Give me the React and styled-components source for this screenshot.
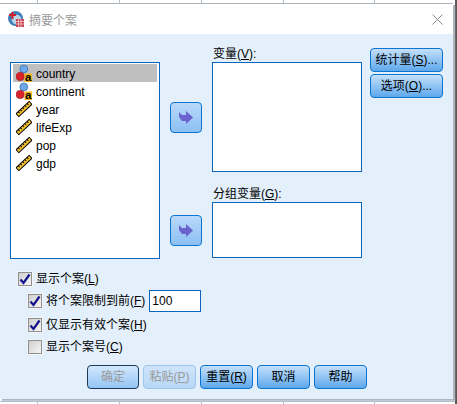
import React from "react";
import styled, { createGlobalStyle } from "styled-components";

const Global = createGlobalStyle`
  html, body { margin: 0; padding: 0; width: 457px; height: 404px; overflow: hidden; }
  body {
    font-family: "Liberation Sans", "Noto Sans CJK SC", sans-serif;
    font-size: 12px;
    color: #000;
    background-color: #fff;
    background-image:
      linear-gradient(#a9bfd2, #a9bfd2), linear-gradient(#a9bfd2, #a9bfd2), linear-gradient(#a9bfd2, #a9bfd2),
      linear-gradient(#a9bfd2, #a9bfd2), linear-gradient(#a9bfd2, #a9bfd2),
      linear-gradient(#5a5a5a, #5a5a5a),
      linear-gradient(to bottom, #a9bfd2 0 1px, #fff 1px);
    background-size: 1px 100%, 1px 100%, 1px 100%, 1px 100%, 1px 100%, 2px 1px, 100% 22px;
    background-position: 37px 0, 119px 0, 201px 0, 283px 0, 374px 0, 455px 19px, 0 5px;
    background-repeat: no-repeat, no-repeat, no-repeat, no-repeat, no-repeat, repeat-y, repeat;
  }
`;

const Dialog = styled.div`
  width: 453px;
  height: 395px;
  margin-top: 4px;
  display: flex;
  flex-direction: column;
  box-shadow: 0 -1px 0 #aab2ba, 2px 1px 0 #aeb5bc, 2px 2px 1px #c4c9ce;
`;

const TitleBar = styled.div`
  height: 30px;
  flex: none;
  background: #fff;
  display: flex;
  align-items: center;
  padding: 0 10px 0 8px;
  gap: 5px;
`;

const TitleText = styled.span`
  font-size: 12px;
  color: #9a9a9a;
  flex: 1;
  font-family: "Noto Sans CJK SC", sans-serif;
`;

const CloseIcon = styled.svg`
  width: 11px;
  height: 11px;
  flex: none;
`;

const Body = styled.div`
  flex: 1;
  background: #e3effb;
  padding: 28px 0 0 10px;
  display: flex;
  flex-direction: column;
`;

const TopRow = styled.div`
  display: flex;
  height: 197px;
  flex: none;
`;

const VarList = styled.div`
  width: 150px;
  box-sizing: border-box;
  border: 1px solid #0b65bd;
  background: #fff;
  padding: 1px 2px;
  flex: none;
`;

const VarRow = styled.div`
  height: 18px;
  display: flex;
  align-items: center;
  gap: 4px;
  padding-left: 3px;
  background: ${(p) => (p.$selected ? "#bfbfbf" : "transparent")};
`;

const VarName = styled.span`
  padding-top: 2px;
  line-height: 16px;
`;

const ArrowColumn = styled.div`
  width: 52px;
  flex: none;
  padding-left: 10px;
  box-sizing: border-box;
  padding-top: 40px;
  display: flex;
  flex-direction: column;
  gap: 82px;
`;

const ArrowButton = styled.div`
  width: 32px;
  height: 31px;
  box-sizing: border-box;
  border: 1px solid #0b74d0;
  border-radius: 4px;
  background: linear-gradient(#b9d8fb, #8cc0f3);
  display: flex;
  align-items: center;
  justify-content: center;
`;

const TargetColumn = styled.div`
  width: 150px;
  flex: none;
  margin-top: -15px;
  display: flex;
  flex-direction: column;
`;

const FieldLabel = styled.div`
  height: 15px;
  line-height: 15px;
  padding-left: 1px;
  white-space: nowrap;
`;

const TargetBox = styled.div`
  height: ${(p) => p.$h}px;
  box-sizing: border-box;
  border: 1px solid #0b65bd;
  background: #fff;
  margin-bottom: ${(p) => p.$after || 0}px;
`;

const SideColumn = styled.div`
  margin-left: 8px;
  margin-top: -14px;
  display: flex;
  flex-direction: column;
  gap: 2px;
`;

const Btn = styled.div`
  width: ${(p) => p.$w}px;
  height: 24px;
  box-sizing: border-box;
  flex: none;
  border: 1px solid ${(p) => (p.$disabled ? "#9cc6ee" : p.$default ? "#1c3a5c" : "#0b74d0")};
  border-radius: 4px;
  background: ${(p) =>
    p.$disabled
      ? "linear-gradient(#cfe4fb, #b8d8f6)"
      : p.$default
      ? "linear-gradient(#d3e7fc, #93c5f5)"
      : "linear-gradient(#c4e0fb, #5ea8ec)"};
  color: ${(p) => (p.$disabled || p.$default ? "#9a9a9a" : "#000")};
  display: flex;
  align-items: center;
  justify-content: center;
  white-space: nowrap;
  line-height: 1;
`;

const Options = styled.div`
  margin-top: 9px;
  padding-left: 8px;
  display: flex;
  flex-direction: column;
`;

const OptionRow = styled.div`
  height: ${(p) => p.$h}px;
  display: flex;
  align-items: center;
  padding-left: ${(p) => (p.$indent ? 10 : 0)}px;
  gap: 4px;
  white-space: nowrap;
`;

const OptionText = styled.span`
  line-height: 16px;
`;

const CheckBox = styled.span`
  width: 14px;
  height: 14px;
  box-sizing: border-box;
  flex: none;
  border: 1px solid #8e8f8f;
  box-shadow: 0 0 0 1px #f2f6fa;
  background: linear-gradient(135deg, #cfcfcf, #f6f6f6);
  display: flex;
  align-items: center;
  justify-content: center;
`;

const NumberBox = styled.div`
  width: 52px;
  height: 22px;
  box-sizing: border-box;
  border: 1px solid #0b65bd;
  background: #fff;
  font-size: 12px;
  line-height: 20px;
  padding-left: 2px;
`;

const Footer = styled.div`
  margin-top: 9px;
  padding-left: 77px;
  display: flex;
  gap: 4px;
`;

const Mn = styled.span`
  text-decoration: underline;
  text-underline-offset: 1px;
`;

const Key = ({ k }) => (
  <>
    (<Mn>{k}</Mn>)
  </>
);

const NominalIcon = () => (
  <svg width="16" height="18" viewBox="0 0 16 18">
    <circle cx="7.8" cy="5" r="3.9" fill="#6fa8e8" stroke="#3a6fb5" strokeWidth="0.8" />
    <circle cx="4.2" cy="12.5" r="4.1" fill="#d8232a" stroke="#8e1418" strokeWidth="0.6" />
    <rect x="8.5" y="9.5" width="7.5" height="8.5" fill="#f6b51a" />
    <text x="12.2" y="17" fontSize="11.5" fontWeight="700" textAnchor="middle" fontFamily="Liberation Sans" fill="#000">a</text>
  </svg>
);

const RulerIcon = () => (
  <svg width="16" height="16" viewBox="0 0 16 16">
    <g transform="rotate(-43 8 8)">
      <rect x="-1" y="6" width="18" height="4" fill="#f4c22b" stroke="#000" strokeWidth="1" />
      <path d="M2 6v2M5 6v2M8 6v2M11 6v2M14 6v2" stroke="#000" strokeWidth="1" />
    </g>
  </svg>
);

const TitleIcon = () => (
  <svg width="16" height="16" viewBox="0 0 16 16">
    <circle cx="7.5" cy="7.5" r="7.5" fill="#3f7fb5" />
    <circle cx="8.5" cy="8.5" r="4.8" fill="#b9d4e6" />
    <path d="M1 4h7M4.5 1v7" stroke="#d4202a" strokeWidth="2" />
    <rect x="8" y="8" width="8" height="8" fill="#c9414f" />
    <path d="M8 10.5h8M8 13h8M10.5 8v8M13 8v8" stroke="#f3c9cc" strokeWidth="0.8" />
  </svg>
);

const Arrow = () => (
  <svg width="14" height="13" viewBox="0 0 14 13">
    <path d="M0 1L3 4H7V0L14 6.5L7 13V10H3L0 6z" fill="#6a63cf" />
  </svg>
);

const Check = () => (
  <svg width="12" height="12" viewBox="0 0 12 12">
    <path d="M1.5 6.5 L4.5 10 L10.5 1.5" fill="none" stroke="#14148c" strokeWidth="2.2" />
  </svg>
);

const vars = [
  { name: "country", kind: "n", selected: true },
  { name: "continent", kind: "n" },
  { name: "year", kind: "s" },
  { name: "lifeExp", kind: "s" },
  { name: "pop", kind: "s" },
  { name: "gdp", kind: "s" },
];

export default function App() {
  return (
    <>
      <Global />
      <Dialog>
        <TitleBar>
          <TitleIcon />
          <TitleText>摘要个案</TitleText>
          <CloseIcon viewBox="0 0 11 11">
            <path d="M0.5 0.5L10.5 10.5M10.5 0.5L0.5 10.5" stroke="#8a8a8a" strokeWidth="1" />
          </CloseIcon>
        </TitleBar>
        <Body>
          <TopRow>
            <VarList>
              {vars.map((v) => (
                <VarRow key={v.name} $selected={v.selected}>
                  {v.kind === "n" ? <NominalIcon /> : <RulerIcon />}
                  <VarName>{v.name}</VarName>
                </VarRow>
              ))}
            </VarList>
            <ArrowColumn>
              <ArrowButton><Arrow /></ArrowButton>
              <ArrowButton><Arrow /></ArrowButton>
            </ArrowColumn>
            <TargetColumn>
              <FieldLabel>变量<Key k="V" />:</FieldLabel>
              <TargetBox $h={110} $after={15} />
              <FieldLabel>分组变量<Key k="G" />:</FieldLabel>
              <TargetBox $h={56} />
            </TargetColumn>
            <SideColumn>
              <Btn $w={73}><span>统计量<Key k="S" />...</span></Btn>
              <Btn $w={73}><span>选项<Key k="O" />...</span></Btn>
            </SideColumn>
          </TopRow>
          <Options>
            <OptionRow $h={22}><CheckBox><Check /></CheckBox><OptionText>显示个案<Key k="L" /></OptionText></OptionRow>
            <OptionRow $h={22} $indent>
              <CheckBox><Check /></CheckBox><OptionText>将个案限制到前<Key k="F" /></OptionText>
              <NumberBox>100</NumberBox>
            </OptionRow>
            <OptionRow $h={26} $indent><CheckBox><Check /></CheckBox><OptionText>仅显示有效个案<Key k="H" /></OptionText></OptionRow>
            <OptionRow $h={18} $indent><CheckBox /><OptionText>显示个案号<Key k="C" /></OptionText></OptionRow>
          </Options>
          <Footer>
            <Btn $w={52} $default>确定</Btn>
            <Btn $w={53} $disabled><span>粘贴<Key k="P" /></span></Btn>
            <Btn $w={53}><span>重置<Key k="R" /></span></Btn>
            <Btn $w={53}>取消</Btn>
            <Btn $w={53}>帮助</Btn>
          </Footer>
        </Body>
      </Dialog>
    </>
  );
}
